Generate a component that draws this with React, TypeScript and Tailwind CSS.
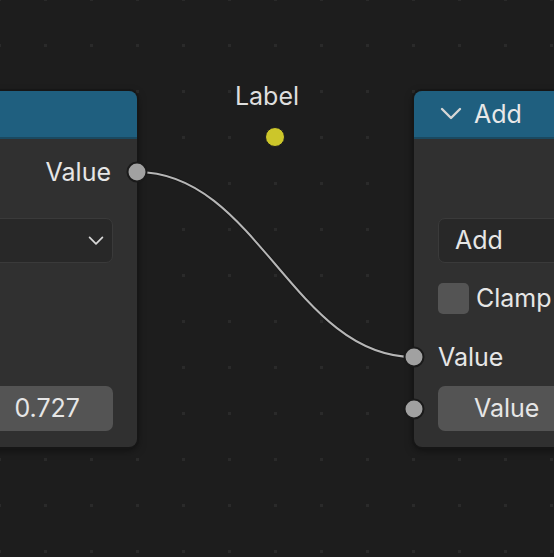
import React from "react";

function Socket({ side }: { side: "left" | "right" }) {
  return (
    <div
      className={`absolute top-1/2 -translate-y-1/2 w-[21px] h-[21px] rounded-full bg-[#a1a1a1] border-2 border-[#1a1a1a] ${
        side === "left" ? "left-0 -translate-x-1/2" : "right-0 translate-x-1/2"
      }`}
    />
  );
}

function Chevron({ className }: { className?: string }) {
  return (
    <svg viewBox="0 0 22 14" className={className} fill="none">
      <path d="M2 2 L11 11 L20 2" stroke="currentColor" strokeWidth="2.4" strokeLinecap="round" strokeLinejoin="round" />
    </svg>
  );
}

function MathNode({
  left,
  width,
  title,
  op,
  clamp,
  inLabel,
  outLabel,
  fieldLabel,
  fieldValue,
}: {
  left: number;
  width: number;
  title?: string;
  op?: string;
  clamp?: string;
  inLabel?: string;
  outLabel?: string;
  fieldLabel?: string;
  fieldValue?: string;
}) {
  return (
    <div
      className="absolute top-[91px] rounded-[8px] bg-[#303030] shadow-[0_0_0_2px_#161616,0_3px_8px_rgba(0,0,0,0.5)]"
      style={{ left, width }}
    >
      <div className="h-[48px] rounded-t-[8px] bg-[#1f5f7f] border-b-2 border-[#1a4960] flex items-center pl-[26px] gap-[12px] text-[#e8e8e8]">
        {title && (
          <>
            <Chevron className="w-[22px] h-[14px] text-[#d6d6d6]" />
            <span className="text-[25px] leading-none">{title}</span>
          </>
        )}
      </div>
      <div className="flex flex-col px-[24px] pt-[10px] pb-[16px]">
        <div className="relative h-[46px] flex items-center justify-end -mr-[24px]">
          {outLabel && <span className="text-[25px] text-[#e6e6e6] mr-[26px] leading-none">{outLabel}</span>}
          <Socket side="right" />
        </div>
        <div className="mt-[23px] h-[45px] rounded-[7px] bg-[#282828] border border-[#3a3a3a] flex items-center justify-between pl-[16px] pr-[8px]">
          <span className="text-[25px] text-[#e6e6e6] leading-none">{op}</span>
          <Chevron className="w-[16px] h-[10px] text-[#d8d8d8]" />
        </div>
        <div className="mt-[20px] h-[31px] flex items-center gap-[7px]">
          <div className="w-[31px] h-[31px] rounded-[5px] bg-[#545454]" />
          {clamp && <span className="text-[25px] text-[#e6e6e6] leading-none">{clamp}</span>}
        </div>
        <div className="relative mt-[28px] h-[30px] flex items-center -ml-[24px] pl-[24px]">
          <Socket side="left" />
          {inLabel && <span className="text-[25px] text-[#e6e6e6] leading-none">{inLabel}</span>}
        </div>
        <div className="relative mt-[14px] h-[45px] -ml-[24px] pl-[24px]">
          <Socket side="left" />
          <div className="h-full rounded-[7px] bg-[#545454] flex items-center justify-between pl-[36px] pr-[33px]">
            <span className="text-[25px] text-[#e6e6e6] leading-none">{fieldLabel}</span>
            <span className="text-[25px] text-[#e6e6e6] leading-none">{fieldValue}</span>
          </div>
        </div>
      </div>
    </div>
  );
}

export default function App() {
  const dots: React.ReactNode[] = [];
  for (let i = 0; i < 13; i++) {
    for (let j = 0; j < 13; j++) {
      dots.push(<rect key={`${i}-${j}`} x={-2 + 46 * i} y={-2 + 46 * j} width={3} height={3} fill="#2a2a2a" />);
    }
  }
  return (
    <div className="relative w-[554px] h-[557px] overflow-hidden bg-[#1d1d1d] font-['Inter',sans-serif]">
      <svg className="absolute inset-0" width={554} height={557}>
        {dots}
      </svg>
      <svg className="absolute inset-0" width={554} height={557}>
        <path d="M137 172 C 257 172, 294 357, 414 357" stroke="#141414" strokeWidth={3.5} fill="none" />
        <path d="M137 172 C 257 172, 294 357, 414 357" stroke="#b6b6b6" strokeWidth={2} fill="none" />
      </svg>
      <MathNode left={-163} width={300} outLabel="Value" fieldValue="0.727" />
      <MathNode left={414} width={300} title="Add" op="Add" clamp="Clamp" inLabel="Value" fieldLabel="Value" />
      <div className="absolute left-[217px] top-[82px] w-[100px] flex flex-col items-center">
        <span className="text-[25px] leading-[28px] text-[#dedede]">Label</span>
      </div>
      <div className="absolute left-[265px] top-[127px] w-[20px] h-[20px] rounded-full bg-[#ccc62a] border border-[#1d1d1d]" />
    </div>
  );
}
